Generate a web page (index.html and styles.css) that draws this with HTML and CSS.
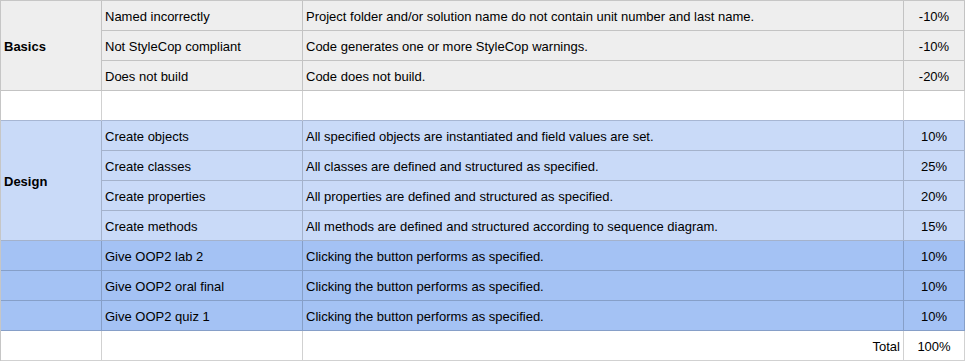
FILE: index.html
```html
<!DOCTYPE html>
<html>
<head>
<meta charset="utf-8">
<link rel="stylesheet" href="styles.css">
</head>
<body>
<table class="rubric">
  <colgroup>
    <col class="c-cat">
    <col class="c-item">
    <col class="c-desc">
    <col class="c-pct">
  </colgroup>
  <tbody>
    <tr class="gray">
      <td class="cat" rowspan="3">Basics</td>
      <td>Named incorrectly</td>
      <td>Project folder and/or solution name do not contain unit number and last name.</td>
      <td class="pct">-10%</td>
    </tr>
    <tr class="gray">
      <td>Not StyleCop compliant</td>
      <td>Code generates one or more StyleCop warnings.</td>
      <td class="pct">-10%</td>
    </tr>
    <tr class="gray">
      <td>Does not build</td>
      <td>Code does not build.</td>
      <td class="pct">-20%</td>
    </tr>
    <tr class="blank">
      <td></td><td></td><td></td><td></td>
    </tr>
    <tr class="light">
      <td class="cat" rowspan="4">Design</td>
      <td>Create objects</td>
      <td>All specified objects are instantiated and field values are set.</td>
      <td class="pct">10%</td>
    </tr>
    <tr class="light">
      <td>Create classes</td>
      <td>All classes are defined and structured as specified.</td>
      <td class="pct">25%</td>
    </tr>
    <tr class="light">
      <td>Create properties</td>
      <td>All properties are defined and structured as specified.</td>
      <td class="pct">20%</td>
    </tr>
    <tr class="light">
      <td>Create methods</td>
      <td>All methods are defined and structured according to sequence diagram.</td>
      <td class="pct">15%</td>
    </tr>
    <tr class="dark">
      <td></td>
      <td>Give OOP2 lab 2</td>
      <td>Clicking the button performs as specified.</td>
      <td class="pct">10%</td>
    </tr>
    <tr class="dark">
      <td></td>
      <td>Give OOP2 oral final</td>
      <td>Clicking the button performs as specified.</td>
      <td class="pct">10%</td>
    </tr>
    <tr class="dark">
      <td></td>
      <td>Give OOP2 quiz 1</td>
      <td>Clicking the button performs as specified.</td>
      <td class="pct">10%</td>
    </tr>
    <tr class="total">
      <td></td>
      <td></td>
      <td class="total-label">Total</td>
      <td class="pct">100%</td>
    </tr>
  </tbody>
</table>
</body>
</html>
```

FILE: styles.css
```css
html, body {
  margin: 0;
  padding: 0;
  background: #ffffff;
}

.rubric {
  border-collapse: separate;
  border-spacing: 0;
  table-layout: fixed;
  width: 965px;
  border-top: 1px solid #c6c6c6;
  border-left: 1px solid #c6c6c6;
  font-family: "Liberation Sans", Arial, sans-serif;
  font-size: 13px;
  color: #000000;
}

.c-cat { width: 101px; }
.c-item { width: 201px; }
.c-desc { width: 601px; }
.c-pct { width: 61px; }

.rubric td {
  box-sizing: border-box;
  height: 30px;
  padding: 1px 3px 0 3px;
  border-right: 1px solid rgba(0, 0, 0, 0.18);
  border-bottom: 1px solid rgba(0, 0, 0, 0.18);
  vertical-align: middle;
  white-space: nowrap;
  overflow: hidden;
  line-height: 15px;
}

.gray td { background: #eeeeee; }
.light td { background: #c9daf8; }
.dark td { background: #a4c2f4; }
.blank td { background: #ffffff; border-bottom-color: #a7b6d3; }
.total td { background: #ffffff; }

.rubric td.cat {
  font-weight: bold;
}

.rubric td.pct {
  text-align: center;
}

.rubric td.total-label {
  text-align: right;
}
```
